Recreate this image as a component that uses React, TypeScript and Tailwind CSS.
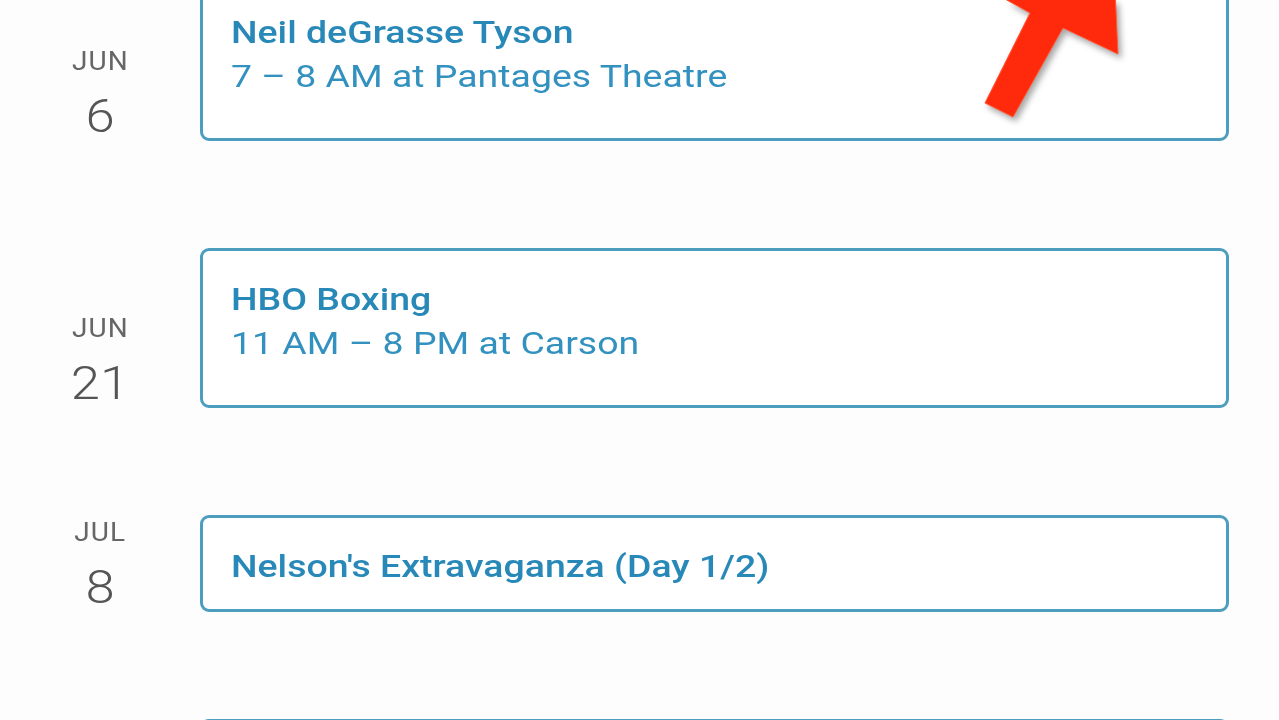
import React from "react";

type Ev = { mon: string; day: string; title: string; sub?: string };

const events: Ev[] = [
  { mon: "JUN", day: "6", title: "Neil deGrasse Tyson", sub: "7 – 8 AM at Pantages Theatre" },
  { mon: "JUN", day: "21", title: "HBO Boxing", sub: "11 AM – 8 PM at Carson" },
  { mon: "JUL", day: "8", title: "Nelson's Extravaganza (Day 1/2)" },
  { mon: "JUL", day: "9", title: "Nelson's Extravaganza (Day 2/2)" },
];

function Row({ ev }: { ev: Ev }) {
  return (
    <div className="flex items-end">
      <div className="w-[200px] shrink-0 flex flex-col items-center pb-[2px]">
        <div className="text-[25px] leading-[30px] tracking-[1px] text-[#666666] mb-[16px] scale-x-[1.12]">{ev.mon}</div>
        <div className="text-[47px] leading-[46px] font-light text-[#555555] scale-x-[1.12]">{ev.day}</div>
      </div>
      <div
        className={
          "mr-[50px] flex-1 rounded-[9px] border-[3px] border-[#4d9dbf] bg-white px-[28px] pt-[26px] " +
          (ev.sub ? "pb-[40px]" : "pb-[21px]")
        }
      >
        <div className="origin-left scale-x-[1.17] whitespace-nowrap text-[32px] leading-[44px] font-medium text-[#2889b9]">
          {ev.title}
        </div>
        {ev.sub && (
          <div className="origin-left scale-x-[1.17] whitespace-nowrap text-[32px] leading-[44px] text-[#3391bf]">
            {ev.sub}
          </div>
        )}
      </div>
    </div>
  );
}

export default function App() {
  return (
    <div
      className="relative h-[720px] w-[1279px] overflow-hidden bg-[#fdfdfd]"
      style={{ fontFamily: "Roboto, 'Noto Sans', sans-serif" }}
    >
      <div className="mt-[-19px] flex flex-col gap-[107px]">
        {events.map((ev, i) => (
          <Row key={i} ev={ev} />
        ))}
      </div>
      <svg
        className="absolute left-0 top-0 pointer-events-none"
        width="1279"
        height="720"
        viewBox="0 0 1279 720"
        style={{ filter: "drop-shadow(3px 4px 3px rgba(0,0,0,0.35))" }}
      >
        <polygon
          points="985,103 1013,117 1063,28 1118,54 1112,-76 978,-16 1030,13"
          fill="#ff2a0c"
          stroke="#ff5a3a"
          strokeWidth="1"
          strokeLinejoin="miter"
        />
      </svg>
    </div>
  );
}
